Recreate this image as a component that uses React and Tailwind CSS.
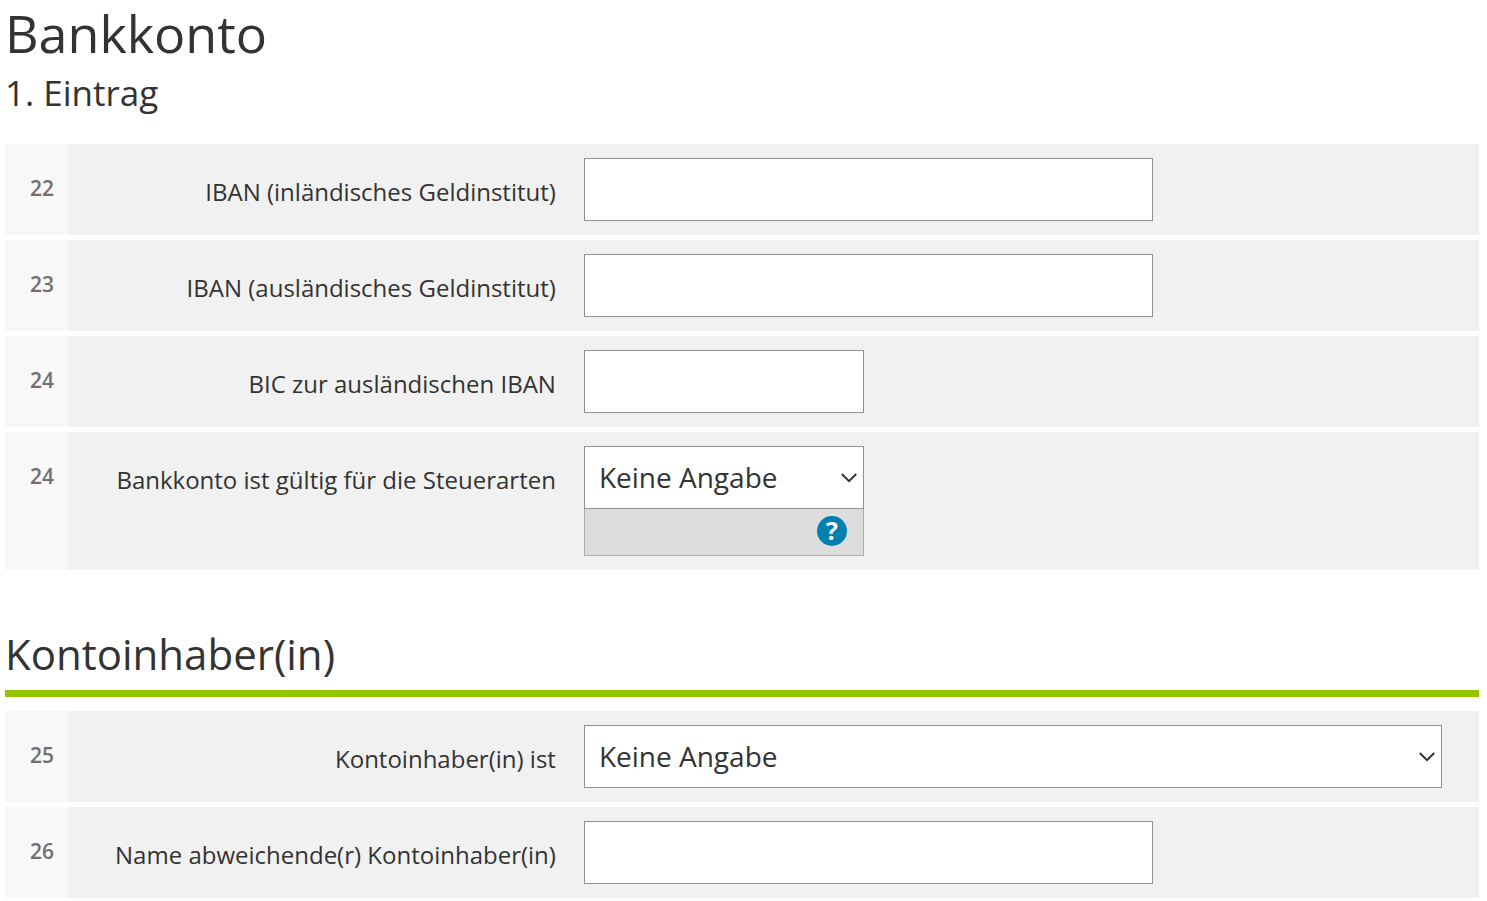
import React from "react";

const control =
  "block h-[63px] max-w-full appearance-none rounded-none border border-[#919191] bg-white px-[14px] pb-[2px] text-[28px] leading-9 text-[#333]";

const accountRows = [
  { id: "iban-inland", line: 22, label: "IBAN (inländisches Geldinstitut)", width: "w-[569px]" },
  { id: "iban-ausland", line: 23, label: "IBAN (ausländisches Geldinstitut)", width: "w-[569px]" },
  { id: "bic", line: 24, label: "BIC zur ausländischen IBAN", width: "w-[280px]" },
  {
    id: "steuerarten",
    line: 24,
    label: "Bankkonto ist gültig für die Steuerarten",
    width: "w-[280px]",
    select: true,
    help: true,
  },
];

const ownerRows = [
  { id: "inhaber", line: 25, label: "Kontoinhaber(in) ist", width: "w-full", select: true },
  { id: "inhaber-name", line: 26, label: "Name abweichende(r) Kontoinhaber(in)", width: "w-[569px]" },
];

const Select = ({ id }) => (
  <div className="relative">
    <select id={id} className={`${control} w-full`}>
      <option>Keine Angabe</option>
    </select>
    <svg
      className="pointer-events-none absolute right-[6px] top-[26px] h-3 w-[18px]"
      viewBox="0 0 18 12"
      fill="none"
      stroke="#333"
      strokeWidth="2"
    >
      <path d="M1.8 2 L9 9.2 L16.2 2" />
    </svg>
  </div>
);

const HelpBar = () => (
  <div className="flex h-[47px] justify-end border border-t-0 border-[#adadad] bg-[#ddd] pr-4 pt-[7px]">
    <button
      type="button"
      aria-label="Hilfe"
      className="flex h-[30px] w-[30px] cursor-pointer items-center justify-center rounded-full bg-[#0080b0] pb-[2px] text-[25px] font-bold leading-7 text-white"
    >
      ?
    </button>
  </div>
);

const FormRow = ({ id, line, label, width, select, help }) => (
  <div className="flex bg-[#f1f1f1]">
    <div className="w-[63px] shrink-0 bg-[#f8f8f8] pr-[14px] pt-[29px] text-right text-[21px] font-semibold leading-[30px] text-[#707070]">
      {line}
    </div>
    <label
      htmlFor={id}
      className="w-[35%] shrink-0 pr-7 pt-8 text-right text-2xl text-[#333]"
    >
      {label}
    </label>
    <div className="min-w-0 flex-1 py-[14px] pr-[37px]">
      <div className={`${width} max-w-full`}>
        {select ? (
          <Select id={id} />
        ) : (
          <input id={id} type="text" className={`${control} w-full`} />
        )}
        {help && <HelpBar />}
      </div>
    </div>
  </div>
);

const App = () => {
  return (
    <main className="bg-white pb-[3px] pl-[5px] pr-2 font-['Open_Sans',sans-serif] text-[#333]">
      {/* Bank account */}
      <section>
        <h1 className="text-[52px] leading-[66px]">Bankkonto</h1>
        <h2 className="text-[35px] leading-[54px]">1. Eintrag</h2>
        <div className="mt-6 flex flex-col gap-[5px]">
          {accountRows.map((row) => (
            <FormRow key={row.id} {...row} />
          ))}
        </div>
      </section>

      {/* Account holder */}
      <section className="mt-[56px]">
        <h2 className="border-b-[7px] border-[#94c600] pb-2 text-[42px] leading-[56px]">
          Kontoinhaber(in)
        </h2>
        <div className="mt-[14px] flex flex-col gap-[5px]">
          {ownerRows.map((row) => (
            <FormRow key={row.id} {...row} />
          ))}
        </div>
      </section>
    </main>
  );
};

export default App;
